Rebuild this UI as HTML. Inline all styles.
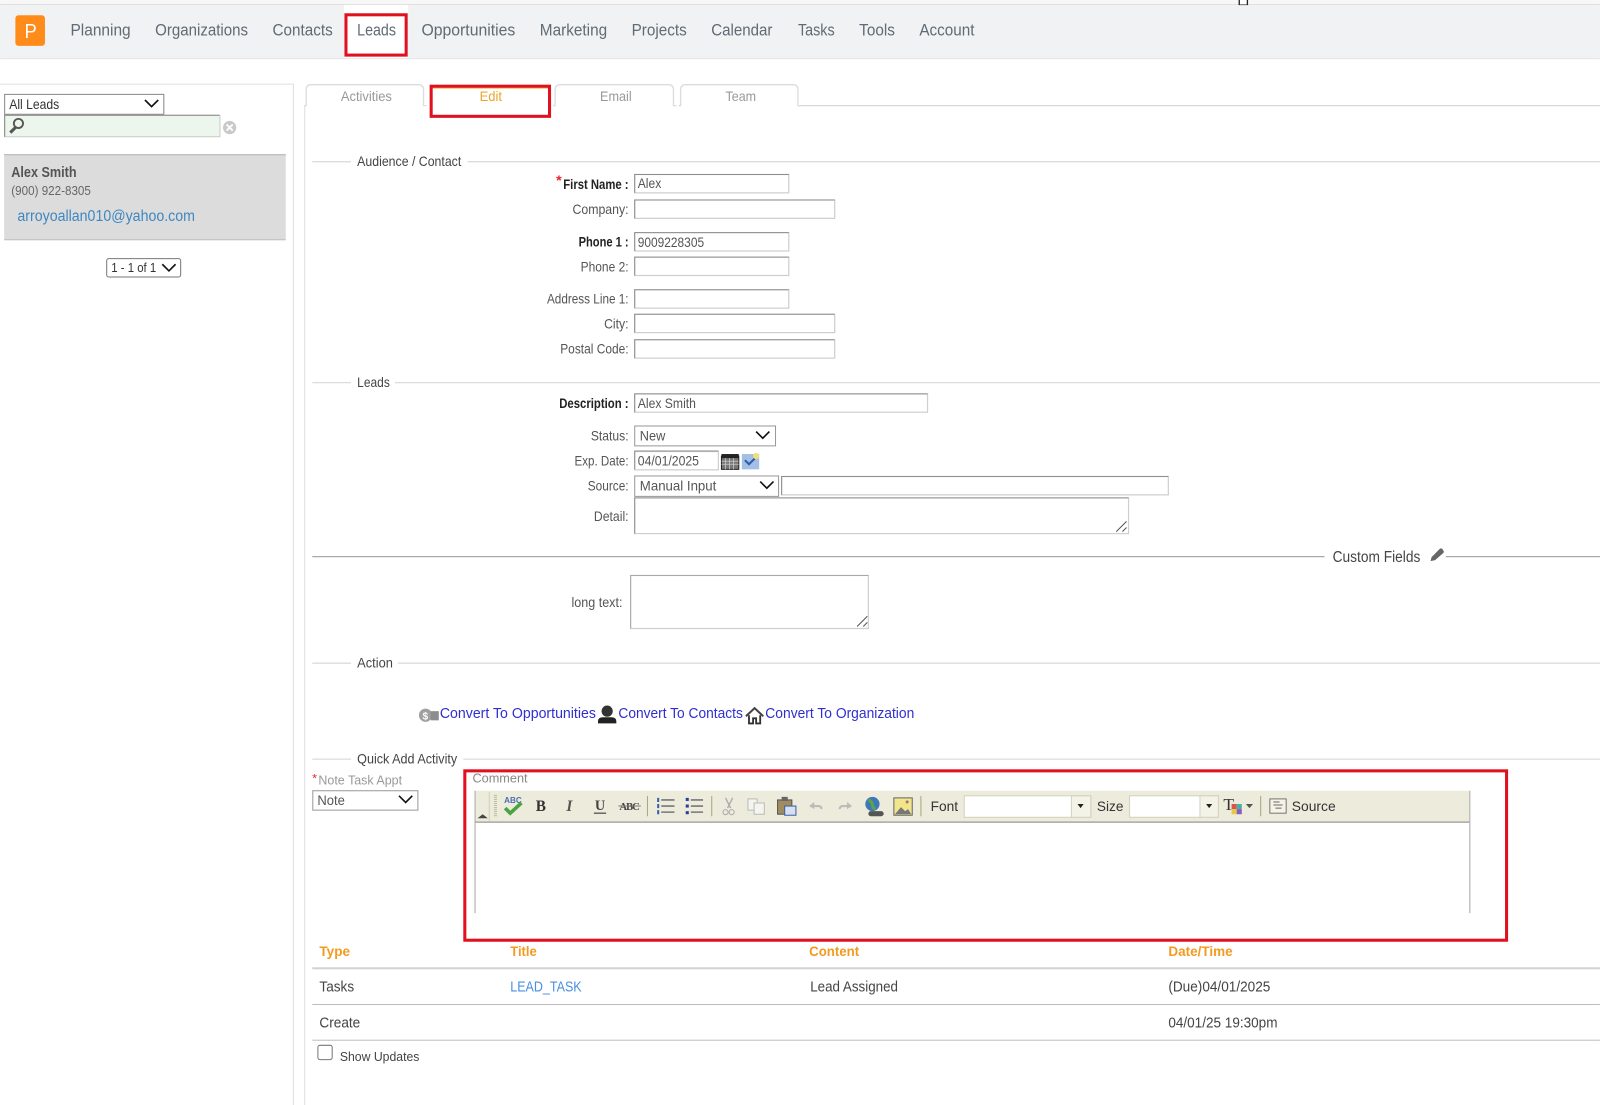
<!DOCTYPE html>
<html lang="en"><head><meta charset="utf-8"><title>Leads - Edit</title>
<style>
html,body{margin:0;padding:0;background:#fff;width:1600px;height:1105px;overflow:hidden}
svg{display:block;filter:blur(.3px)}
text{font-family:"Liberation Sans",sans-serif;font-size:14px;fill:#555}
.n{font-size:16px;fill:#5f6b75}
.l{fill:#555;text-anchor:start}
.b{font-weight:bold;fill:#222}
.s{fill:#444}
.g{fill:#999}
.v{fill:#555;font-size:13.5px}
.c{fill:#2f2fd0;font-size:14.5px}
.o{fill:#f39a1f;font-weight:bold}
.i{fill:#fff;stroke:#cfcfcf;stroke-width:1.2}
.d{fill:none;stroke:#8e8e8e;stroke-width:1}
.r{fill:none;stroke:#e0101f;stroke-width:3}
.h{fill:none;stroke:#dcdcdc;stroke-width:1.3}
.t{font-size:14.5px;fill:#444}
.e{fill:none;stroke:#111;stroke-width:1.6}
.sep{stroke:#a9a878;stroke-width:1}
</style></head><body>
<svg width="1600" height="1105" viewBox="0 0 1568 1083" xmlns="http://www.w3.org/2000/svg">
<rect width="1568" height="1083" fill="#fff"/>
<!-- top -->
<rect width="1568" height="5" fill="#f7f7f7"/>
<rect y="4" width="1568" height="1" fill="#dedede"/>
<rect x="1214.500" y="-2" width="8" height="7" fill="#fff" stroke="#222" stroke-width="1.3"/>
<rect y="5" width="1568" height="52" fill="#f1f2f4"/>
<rect y="57" width="1568" height="1" fill="#e2e2e2"/>
<rect x="15" y="15" width="29" height="30" rx="3" fill="#ff8c1a"/>
<text x="24" y="37" style="font-size:20px;fill:#fff" textLength="12" lengthAdjust="spacingAndGlyphs">P</text>
<rect x="337" y="5" width="63" height="52" fill="#fff"/>
<text class="n" x="69" y="35" textLength="59" lengthAdjust="spacingAndGlyphs">Planning</text>
<text class="n" x="152" y="35" textLength="91" lengthAdjust="spacingAndGlyphs">Organizations</text>
<text class="n" x="267" y="35" textLength="59" lengthAdjust="spacingAndGlyphs">Contacts</text>
<text class="n" x="350" y="35" textLength="38" lengthAdjust="spacingAndGlyphs">Leads</text>
<text class="n" x="413" y="35" textLength="92" lengthAdjust="spacingAndGlyphs">Opportunities</text>
<text class="n" x="529" y="35" textLength="66" lengthAdjust="spacingAndGlyphs">Marketing</text>
<text class="n" x="619" y="35" textLength="54" lengthAdjust="spacingAndGlyphs">Projects</text>
<text class="n" x="697" y="35" textLength="60" lengthAdjust="spacingAndGlyphs">Calendar</text>
<text class="n" x="782" y="35" textLength="36" lengthAdjust="spacingAndGlyphs">Tasks</text>
<text class="n" x="842" y="35" textLength="35" lengthAdjust="spacingAndGlyphs">Tools</text>
<text class="n" x="901" y="35" textLength="54" lengthAdjust="spacingAndGlyphs">Account</text>
<rect class="r" x="339" y="14.500" width="59" height="39.500"/>

<!-- left panel -->
<path d="M0 82.500H287.500V1083" fill="none" stroke="#e3e3e3" stroke-width="1.2"/>
<rect x="4.500" y="92.500" width="156" height="19.500" fill="#fff" stroke="#888"/>
<text x="9" y="107" style="font-size:13.5px;fill:#333" textLength="49" lengthAdjust="spacingAndGlyphs">All Leads</text>
<path class="e" d="M142 98l6.500 6.500 6.500-6.500"/>
<rect x="4.500" y="113" width="211" height="21" fill="#edf6ec" stroke="#c6cdc6"/>
<path d="M4.500 134V113H215" fill="none" stroke="#888"/>
<circle cx="18" cy="121" r="4.500" fill="none" stroke="#555" stroke-width="1.800"/>
<path d="M15 125l-5 5" stroke="#555" stroke-width="3"/>
<circle cx="225" cy="125" r="6.500" fill="#c9c9c9"/>
<path d="M222 122l6 6m0-6l-6 6" stroke="#fff" stroke-width="1.800"/>
<rect x="4" y="151" width="276" height="84" fill="#dcdcdc"/>
<rect x="4" y="151" width="276" height="1.200" fill="#bdbdbd"/>
<rect x="4" y="234.500" width="276" height="1" fill="#bdbdbd"/>
<text x="11" y="173.500" style="font-size:14.5px;fill:#555;font-weight:bold" textLength="64" lengthAdjust="spacingAndGlyphs">Alex Smith</text>
<text x="11" y="191" style="font-size:12.5px;fill:#666" textLength="78" lengthAdjust="spacingAndGlyphs">(900) 922-8305</text>
<text x="17" y="216.500" style="font-size:15px;fill:#3f87c0" textLength="174" lengthAdjust="spacingAndGlyphs">arroyoallan010@yahoo.com</text>
<rect x="104.500" y="253.500" width="72.500" height="18" rx="2" fill="#fff" stroke="#777"/>
<text x="109" y="266.500" style="font-size:13px;fill:#333" textLength="44" lengthAdjust="spacingAndGlyphs">1 - 1 of 1</text>
<path class="e" d="M159 259l6.500 6.500 6.500-6.500"/>

<!-- tabs -->
<path d="M298.500 1083V103" stroke="#e3e3e3" stroke-width="1.200" fill="none"/>
<path d="M783 103.500H1568" stroke="#d8d8d8" stroke-width="1.200"/>
<path class="h" d="M298 103.500h2V88q0-5 5-5h105q5 0 5 5v15.500h3"/>
<path class="h" d="M542 103.500h2V88q0-5 5-5h106q5 0 5 5v15.500h3"/>
<path class="h" d="M665 103.500h2V88q0-5 5-5h105q5 0 5 5v15.500h2"/>
<text class="g" x="334" y="99" style="font-size:13.5px" textLength="50" lengthAdjust="spacingAndGlyphs">Activities</text>
<text class="g" x="588" y="99" style="font-size:13.5px" textLength="31" lengthAdjust="spacingAndGlyphs">Email</text>
<text class="g" x="711" y="99" style="font-size:13.5px" textLength="30" lengthAdjust="spacingAndGlyphs">Team</text>
<rect x="423" y="85" width="115" height="2" fill="#f7c66a"/>
<text x="470" y="99" style="font-size:13.5px;fill:#eba52b" textLength="22" lengthAdjust="spacingAndGlyphs">Edit</text>
<rect class="r" x="422.500" y="84.500" width="116" height="29.500"/>

<!-- section lines -->
<path class="h" d="M306 158.500h38M458 158.500H1568M306 375h38M387 375H1568M306 650h38M390 650H1568M306 744h38M454 744H1568"/>
<path stroke="#a9a9a9" stroke-width="1.200" d="M306 545.500H1298M1417 545.500H1568"/>
<text class="s" x="350" y="162.500" style="font-size:13.5px" textLength="102" lengthAdjust="spacingAndGlyphs">Audience / Contact</text>
<text class="s" x="350" y="379.500" style="font-size:13.5px" textLength="32" lengthAdjust="spacingAndGlyphs">Leads</text>
<text class="s" x="350" y="654" style="font-size:13.5px" textLength="35" lengthAdjust="spacingAndGlyphs">Action</text>
<text class="s" x="350" y="748.500" style="font-size:13.5px" textLength="98" lengthAdjust="spacingAndGlyphs">Quick Add Activity</text>
<text class="s" x="1306" y="551" style="font-size:15px" textLength="86" lengthAdjust="spacingAndGlyphs">Custom Fields</text>
<path d="M1402 550l1-4 8-8q1-1 2.500 0l1 1.500q1 1 0 2.500l-8 7z" fill="#666"/>

<!-- labels -->
<text x="545" y="181.500" style="fill:#e8232a;font-size:14px;font-weight:bold">*</text>
<text class="b" x="552" y="185" style="font-size:13.500px" textLength="64" lengthAdjust="spacingAndGlyphs">First Name :</text>
<text class="l" x="561" y="209.500" style="font-size:13.500px" textLength="55" lengthAdjust="spacingAndGlyphs">Company:</text>
<text class="b" x="567" y="241.500" style="font-size:13.500px" textLength="49" lengthAdjust="spacingAndGlyphs">Phone 1 :</text>
<text class="l" x="569" y="266" style="font-size:13.500px" textLength="47" lengthAdjust="spacingAndGlyphs">Phone 2:</text>
<text class="l" x="536" y="297.500" style="font-size:13.500px" textLength="80" lengthAdjust="spacingAndGlyphs">Address Line 1:</text>
<text class="l" x="592" y="322" style="font-size:13.500px" textLength="24" lengthAdjust="spacingAndGlyphs">City:</text>
<text class="l" x="549" y="346.500" style="font-size:13.500px" textLength="67" lengthAdjust="spacingAndGlyphs">Postal Code:</text>
<text class="b" x="548" y="400" style="font-size:13.500px" textLength="68" lengthAdjust="spacingAndGlyphs">Description :</text>
<text class="l" x="579" y="431.500" style="font-size:13.500px" textLength="37" lengthAdjust="spacingAndGlyphs">Status:</text>
<text class="l" x="563" y="456" style="font-size:13.500px" textLength="53" lengthAdjust="spacingAndGlyphs">Exp. Date:</text>
<text class="l" x="576" y="480.500" style="font-size:13.500px" textLength="40" lengthAdjust="spacingAndGlyphs">Source:</text>
<text class="l" x="582" y="510.500" style="font-size:13.500px" textLength="34" lengthAdjust="spacingAndGlyphs">Detail:</text>
<text class="l" x="560" y="595" style="font-size:13.500px" textLength="50" lengthAdjust="spacingAndGlyphs">long text:</text>

<!-- inputs -->
<rect class="i" x="622" y="171" width="151" height="18"/><path class="d" d="M622 189V171H773"/>
<text class="v" x="625" y="184.500" textLength="23" lengthAdjust="spacingAndGlyphs">Alex</text>
<rect class="i" x="622" y="196" width="196" height="18"/><path class="d" d="M622 214V196H818"/>
<rect class="i" x="622" y="228" width="151" height="18"/><path class="d" d="M622 246V228H773"/>
<text class="v" x="625" y="242" textLength="65" lengthAdjust="spacingAndGlyphs">9009228305</text>
<rect class="i" x="622" y="252" width="151" height="18"/><path class="d" d="M622 270V252H773"/>
<rect class="i" x="622" y="284" width="151" height="18"/><path class="d" d="M622 302V284H773"/>
<rect class="i" x="622" y="308" width="196" height="18"/><path class="d" d="M622 326V308H818"/>
<rect class="i" x="622" y="333" width="196" height="18"/><path class="d" d="M622 351V333H818"/>
<rect class="i" x="622" y="386" width="287" height="18"/><path class="d" d="M622 404V386H909"/>
<text class="v" x="625" y="400" textLength="57" lengthAdjust="spacingAndGlyphs">Alex Smith</text>
<rect x="622" y="417.500" width="138" height="19.500" fill="#fff" stroke="#999"/>
<text class="v" x="627" y="431.500" textLength="25" lengthAdjust="spacingAndGlyphs">New</text>
<path class="e" d="M741 423l6.500 6.500 6.500-6.500"/>
<rect class="i" x="622" y="442.500" width="82" height="18"/><path class="d" d="M622 460V442H704"/>
<text class="v" x="625" y="456" textLength="60" lengthAdjust="spacingAndGlyphs">04/01/2025</text>
<rect x="707" y="447" width="17" height="13" fill="#777" stroke="#222"/>
<rect x="707" y="445" width="17" height="4" fill="#222"/>
<path d="M707 452h17M707 455h17M711 449v11M715 449v11M719 449v11" stroke="#ddd" stroke-width=".6"/>
<rect x="727" y="445" width="17" height="15" fill="#a3bfe6"/>
<path d="M730 451l4 4 6-6" fill="none" stroke="#2d5ca8" stroke-width="2"/>
<circle cx="741" cy="447" r="3" fill="#f0e070"/>
<rect x="622" y="466.500" width="141" height="20" fill="#fff" stroke="#999"/>
<text class="v" x="627" y="480.500" textLength="75" lengthAdjust="spacingAndGlyphs">Manual Input</text>
<path class="e" d="M745 472l6.500 6.500 6.500-6.500"/>
<rect class="i" x="766" y="467" width="379" height="18"/><path class="d" d="M766 485V467H1145"/>
<rect class="i" x="622" y="488" width="484" height="35"/><path class="d" d="M622 523V488H1106"/>
<path d="M1094 521l10-10M1100 521l4-4" stroke="#555"/>
<rect class="i" x="618" y="564" width="233" height="52"/>
<path d="M618 616V564H851" fill="none" stroke="#aaa"/>
<path d="M840 614l10-10M846 614l4-4" stroke="#555"/>

<!-- convert -->
<circle cx="417" cy="701" r="6.500" fill="#a0a0a0"/>
<text x="414" y="705" style="font-size:10px;fill:#fff;font-weight:bold">$</text>
<rect x="422" y="697" width="8" height="9" fill="#8d8d8d"/>
<text class="c" x="431" y="703.500" textLength="153" lengthAdjust="spacingAndGlyphs">Convert To Opportunities</text>
<circle cx="595" cy="697" r="5.500" fill="#333"/>
<path d="M586 709v-2q0-4 5-4h8q5 0 5 4v2z" fill="#222"/>
<text class="c" x="606" y="703.500" textLength="122" lengthAdjust="spacingAndGlyphs">Convert To Contacts</text>
<path d="M731 702l8.500-8 8.500 8" fill="none" stroke="#444" stroke-width="2"/>
<path d="M734 701v8h4v-5h3v5h4v-8" fill="none" stroke="#333" stroke-width="1.800"/>
<text class="c" x="750" y="703.500" textLength="146" lengthAdjust="spacingAndGlyphs">Convert To Organization</text>

<!-- quick add -->
<text x="306" y="767" style="fill:#e8232a;font-size:12px">*</text>
<text x="312" y="769" style="font-size:13px;fill:#999" textLength="82" lengthAdjust="spacingAndGlyphs">Note Task Appt</text>
<rect x="306.500" y="775" width="103" height="19" fill="#fff" stroke="#999"/>
<text class="v" x="311" y="789" textLength="27" lengthAdjust="spacingAndGlyphs">Note</text>
<path class="e" d="M391 780l6.500 6.500 6.500-6.500"/>
<rect class="r" x="455.500" y="755.500" width="1021" height="166"/>
<text x="463" y="767" style="font-size:13px;fill:#888" textLength="54" lengthAdjust="spacingAndGlyphs">Comment</text>

<!-- editor -->
<rect x="465" y="775" width="975" height="30" fill="#ecebdc"/>
<rect x="465" y="805" width="975" height="1.500" fill="#a9a9a0"/>
<path d="M465.500 775V895M1440.500 775V895" stroke="#a8a8a8"/>
<path d="M468 802l5-4 5 4z" fill="#444"/>
<path d="M485.500 779v22" stroke="#bdbc98" stroke-width="3" stroke-dasharray="1 1"/>
<path d="M479.500 776v29" stroke="#cfcfbc"/>
<text x="494" y="787" style="font-size:8px;fill:#4a6fb0;font-weight:bold">ABC</text>
<path d="M495 792l5 5 11-10" fill="none" stroke="#49a340" stroke-width="3.500"/>
<text x="525" y="795" style="font-family:'Liberation Serif',serif;font-size:15px;font-weight:bold;fill:#333">B</text>
<text x="555" y="795" style="font-family:'Liberation Serif',serif;font-size:15px;font-weight:bold;font-style:italic;fill:#555">I</text>
<text x="583" y="794" style="font-family:'Liberation Serif',serif;font-size:14px;font-weight:bold;fill:#444">U</text>
<path d="M582 797h12" stroke="#555" stroke-width="1.300"/>
<text x="607" y="794" style="font-family:'Liberation Serif',serif;font-size:10.500px;font-weight:bold;fill:#444" textLength="20">ABC</text>
<path d="M606 790h22" stroke="#777"/>
<path class="sep" d="M634.500 780v20M697.500 780v20M902.500 780v20M1235.500 780v20"/>
<path d="M648 784h13M648 790h13M648 796h13" stroke="#777" stroke-width="1.500"/>
<path d="M645 782v4M645 788v4M645 794v4" stroke="#3a5fa5" stroke-width="2"/>
<path d="M677 784h12M677 790h12M677 796h12" stroke="#777" stroke-width="1.500"/>
<rect x="672" y="782" width="3" height="3" fill="#2b3f94"/><rect x="672" y="788.500" width="3" height="3" fill="#2b3f94"/><rect x="672" y="795" width="3" height="3" fill="#2b3f94"/>
<path d="M711 782l5 10M718 782l-5 10" stroke="#aaa" stroke-width="1.300"/>
<circle cx="711" cy="796" r="2.500" fill="none" stroke="#aaa"/><circle cx="717" cy="796" r="2.500" fill="none" stroke="#aaa"/>
<rect x="733" y="783" width="9" height="11" fill="#f5f5f0" stroke="#bbb"/><rect x="739" y="787" width="10" height="11" fill="#f5f5f0" stroke="#bbb"/>
<rect x="762" y="784" width="14" height="14" fill="#a08c60" stroke="#555"/><rect x="766" y="781" width="6" height="4" fill="#666"/><rect x="769" y="790" width="11" height="9" fill="#d8e0f0" stroke="#3a5fa5"/>
<path d="M794 790h8q3 0 3 3" fill="none" stroke="#bbb" stroke-width="2"/><path d="M798 786l-5 4 5 3z" fill="#bbb"/>
<path d="M834 790h-8q-3 0-3 3" fill="none" stroke="#bbb" stroke-width="2"/><path d="M830 786l5 4-5 3z" fill="#bbb"/>
<circle cx="855" cy="788" r="7" fill="#3f78b8"/><path d="M851 784q4 2 4 5t3 4" stroke="#5ca34a" stroke-width="3" fill="none"/>
<rect x="851" y="795" width="15" height="5" rx="2.500" fill="#555"/>
<rect x="876" y="782" width="18" height="17" fill="#f2e68d" stroke="#666"/><path d="M877 798l6-7 4 4 3-2 3 5z" fill="#777"/><circle cx="889" cy="786" r="1.500" fill="#a76"/>
<text x="912" y="795" style="font-size:13.500px;fill:#333" textLength="27" lengthAdjust="spacingAndGlyphs">Font</text>
<rect x="945" y="780" width="124" height="21" fill="#fff" stroke="#d3d2bf"/>
<rect x="1050" y="780" width="19" height="21" fill="#f4f3e8" stroke="#d3d2bf"/>
<path d="M1056 788h6l-3 4z" fill="#222"/>
<text x="1075" y="795" style="font-size:13.500px;fill:#333" textLength="26" lengthAdjust="spacingAndGlyphs">Size</text>
<rect x="1107" y="780" width="87" height="21" fill="#fff" stroke="#d3d2bf"/>
<rect x="1176" y="780" width="18" height="21" fill="#f4f3e8" stroke="#d3d2bf"/>
<path d="M1182 788h6l-3 4z" fill="#222"/>
<text x="1199" y="794" style="font-family:'Liberation Serif',serif;font-size:17px;fill:#333">T</text>
<rect x="1207" y="788" width="5" height="5" fill="#d9534f"/><rect x="1212" y="788" width="5" height="5" fill="#49b0a0"/><rect x="1207" y="793" width="5" height="5" fill="#e8c840"/><rect x="1212" y="793" width="5" height="5" fill="#8a5cc0"/>
<path d="M1221 788h7l-3.500 4z" fill="#555"/>
<rect x="1244.500" y="783" width="16" height="14" fill="#f4f3e8" stroke="#777"/>
<path d="M1248 786h6M1248 789h9M1250 792h6" stroke="#666"/>
<text x="1266" y="795" style="font-size:13.500px;fill:#333" textLength="43" lengthAdjust="spacingAndGlyphs">Source</text>

<!-- table -->
<text class="o" x="313" y="937" textLength="30" lengthAdjust="spacingAndGlyphs">Type</text>
<text class="o" x="500" y="937" textLength="26" lengthAdjust="spacingAndGlyphs">Title</text>
<text class="o" x="793" y="937" textLength="49" lengthAdjust="spacingAndGlyphs">Content</text>
<text class="o" x="1145" y="937" textLength="63" lengthAdjust="spacingAndGlyphs">Date/Time</text>
<rect x="306" y="948" width="1262" height="2" fill="#d2d2d2"/>
<text class="t" x="313" y="972" textLength="34" lengthAdjust="spacingAndGlyphs">Tasks</text>
<text class="t" x="500" y="972" style="fill:#4a8fe0" textLength="70" lengthAdjust="spacingAndGlyphs">LEAD_TASK</text>
<text class="t" x="794" y="972" textLength="86" lengthAdjust="spacingAndGlyphs">Lead Assigned</text>
<text class="t" x="1145" y="972" textLength="100" lengthAdjust="spacingAndGlyphs">(Due)04/01/2025</text>
<rect x="306" y="984" width="1262" height="1" fill="#bdbdbd"/>
<text class="t" x="313" y="1007" textLength="40" lengthAdjust="spacingAndGlyphs">Create</text>
<text class="t" x="1145" y="1007" textLength="107" lengthAdjust="spacingAndGlyphs">04/01/25 19:30pm</text>
<rect x="306" y="1019" width="1262" height="1" fill="#bdbdbd"/>
<rect x="311.500" y="1024.500" width="14" height="14" rx="2" fill="#fff" stroke="#777"/>
<text x="333" y="1040" style="font-size:13px;fill:#444" textLength="78" lengthAdjust="spacingAndGlyphs">Show Updates</text>
</svg>
</body></html>
